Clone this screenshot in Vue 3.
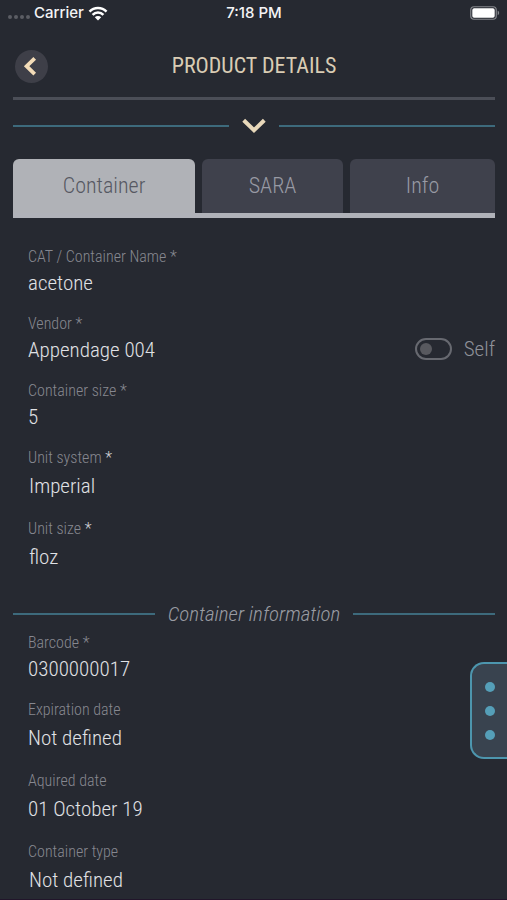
<script setup>
import { ref } from 'vue'

const tabs = ['Container', 'SARA', 'Info']
const activeTab = ref('Container')
const selfVendor = ref(false)

const details = ref([
  { id: 'name', label: 'CAT / Container Name', mark: 'dim', kind: 'text', value: 'acetone' },
  { id: 'vendor', label: 'Vendor', mark: 'dim', kind: 'text', value: 'Appendage 004', self: true },
  { id: 'size', label: 'Container size', mark: 'dim', kind: 'text', value: '5' },
  { id: 'system', label: 'Unit system', mark: 'bright', kind: 'select', value: 'Imperial' },
  { id: 'unit', label: 'Unit size', mark: 'bright', kind: 'select', value: 'floz' },
])

const information = ref([
  { id: 'barcode', label: 'Barcode', mark: 'dim', kind: 'text', value: '0300000017' },
  { id: 'expires', label: 'Expiration date', kind: 'date', value: 'Not defined' },
  { id: 'acquired', label: 'Aquired date', kind: 'date', value: '01 October 19' },
  { id: 'type', label: 'Container type', kind: 'select', value: 'Not defined' },
])
</script>

<template>
  <div class="screen">
    <div class="status">
      <div class="carrier">
        <span class="signal"><i></i><i></i><i></i><i></i></span>
        <span>Carrier</span>
        <svg class="wifi" viewBox="0 0 20 15" aria-hidden="true">
          <path d="M1.5 5.6a12 12 0 0 1 17 0" />
          <path d="M4.6 8.8a7.6 7.6 0 0 1 10.8 0" />
          <path class="solid" d="M10 14.6 6.8 11.3a4.6 4.6 0 0 1 6.4 0Z" />
        </svg>
      </div>
      <span class="time">7:18 PM</span>
      <svg class="battery" viewBox="0 0 30 14" aria-hidden="true">
        <rect class="shell" x=".75" y=".75" width="25.5" height="12.5" rx="3.2" />
        <rect class="charge" x="2.3" y="2.3" width="22.4" height="9.4" rx="1.8" />
        <path class="cap" d="M27.7 4.8c1.9.6 1.9 3.8 0 4.4Z" />
      </svg>
    </div>

    <header class="header">
      <button class="back" type="button" aria-label="Back">
        <svg viewBox="0 0 32 32" aria-hidden="true"><path d="M19.7 8.3 11.6 16.2l8.1 7.9" /></svg>
      </button>
      <h1>PRODUCT DETAILS</h1>
    </header>

    <div class="divider expand">
      <button class="toggle" type="button" aria-label="Expand">
        <svg viewBox="0 0 24 16" aria-hidden="true"><path d="M1.7 2.2 12 12.2 22.3 2.2" /></svg>
      </button>
    </div>

    <nav class="tabs" role="tablist">
      <button
        v-for="tab in tabs"
        :key="tab"
        type="button"
        role="tab"
        :aria-selected="activeTab === tab"
        :class="['tab', { active: activeTab === tab }]"
        @click="activeTab = tab"
      >{{ tab }}</button>
    </nav>

    <form class="form" @submit.prevent>
      <template v-for="(group, index) in [details, information]" :key="index">
        <div v-if="index === 1" class="divider section"><h2>Container information</h2></div>
        <div class="fields">
          <div v-for="field in group" :key="field.id" class="row">
            <div class="field">
              <label :for="field.id">{{ field.label }}<span v-if="field.mark" :class="field.mark"> *</span></label>
              <select v-if="field.kind === 'select'" :id="field.id" v-model="field.value">
                <option>{{ field.value }}</option>
              </select>
              <input v-else :id="field.id" v-model="field.value" type="text" :class="field.kind" />
            </div>
            <label v-if="field.self" class="self">
              <input v-model="selfVendor" type="checkbox" class="switch" />
              <span>Self</span>
            </label>
          </div>
        </div>
      </template>
    </form>

    <button class="drawer" type="button" aria-label="More actions"><i></i><i></i><i></i></button>
  </div>
</template>

<style>
body {
  background: #262931;
}
</style>

<style scoped>
.screen {
  position: relative;
  box-sizing: border-box;
  min-height: 100vh;
  overflow: hidden;
  background: #262931;
  border-bottom: 1px solid #21152a;
  font-family: "Roboto Condensed", "Liberation Sans Narrow", Roboto, sans-serif;
  font-weight: 300;
}
button, input, select {
  font: inherit;
  color: inherit;
  margin: 0;
  padding: 0;
  border: 0;
  background: none;
}
.status {
  display: grid;
  grid-template-columns: 1fr auto 1fr;
  align-items: center;
  height: 26px;
  padding: 0 7px 0 8px;
  color: #f4f4f6;
  font: 500 15px/18px Inter, sans-serif;
}
.carrier {
  display: flex;
  align-items: center;
  gap: 4px;
}
.signal {
  display: flex;
  gap: 2px;
  padding-top: 8px;
}
.signal i {
  width: 4px;
  height: 4px;
  border-radius: 50%;
  background: #5b5d64;
}
.wifi {
  width: 20px;
  height: 15px;
  fill: none;
  stroke: #fff;
  stroke-width: 2.6;
}
.wifi .solid {
  fill: #fff;
  stroke: none;
}
.battery {
  width: 30px;
  height: 14px;
  justify-self: end;
}
.shell {
  fill: none;
  stroke: #85878c;
  stroke-width: 1.2;
}
.charge { fill: #fff; }
.cap { fill: #85878c; }
.header {
  display: grid;
  grid-template-columns: 34px 1fr 34px;
  align-items: center;
  height: 71px;
  margin: 0 12px 0 13px;
  padding: 0 2px;
  border-bottom: 3px solid #4b4e57;
  color: #d9ccb4;
}
.back {
  width: 33px;
  height: 33px;
  margin-top: 9px;
  border-radius: 50%;
  background: #3e3f48;
}
.back svg {
  display: block;
  width: 32px;
  height: 32px;
  fill: none;
  stroke: #f3dcb8;
  stroke-width: 3.8;
}
h1 {
  margin: 8px 0 0;
  text-align: center;
  font-size: 22px;
  font-weight: 400;
  line-height: 28px;
}
.divider {
  display: flex;
  align-items: center;
  gap: 13px;
  margin: 0 12px 0 13px;
}
.divider::before, .divider::after {
  content: "";
  flex: 1;
  height: 2px;
  background: #3d6a7c;
}
.expand {
  height: 51px;
}
.toggle svg {
  display: block;
  width: 24px;
  height: 16px;
  fill: none;
  stroke: #e8d8ba;
  stroke-width: 4;
}
.tabs {
  display: grid;
  grid-template-columns: 182fr 141fr 145fr;
  gap: 7px;
  height: 54px;
  margin: 8px 12px 0 13px;
  border-bottom: 5px solid #b0b2b9;
}
.tab {
  padding-bottom: 2px;
  border-radius: 6px 6px 0 0;
  background: #3f414c;
  color: #989aa4;
  font-size: 22px;
}
.tab.active {
  background: #b0b2b7;
  color: #565862;
}
.form {
  padding-top: 29px;
}
.fields {
  display: grid;
  gap: 15px;
  padding: 0 12px 0 28px;
}
.row {
  display: flex;
  justify-content: space-between;
  align-items: flex-end;
}
.field {
  display: flex;
  flex-direction: column;
  color: #e0e1e5;
}
.field label {
  color: #868890;
  font-size: 16px;
  line-height: 20px;
  white-space: pre;
}
.field .bright { color: #d3d4d8; }
.field input, .field select {
  width: 240px;
  height: 32px;
  font-size: 21px;
}
.field .date, .field select {
  height: 36px;
}
.field select {
  appearance: none;
  padding-left: 1px;
}
.self {
  display: flex;
  align-items: center;
  gap: 12px;
  height: 34px;
  color: #8f9199;
  font-size: 21px;
}
.self .switch {
  appearance: none;
  box-sizing: border-box;
  display: grid;
  align-items: center;
  width: 37px;
  height: 22px;
  padding: 0 3px;
  border: 2px solid #676970;
  border-radius: 11px;
}
.switch::before {
  content: "";
  width: 12px;
  height: 12px;
  border-radius: 50%;
  background: #58595f;
}
.switch:checked::before { justify-self: end; }
.section {
  margin-top: 23px;
  margin-bottom: 3px;
  height: 32px;
}
.section h2 {
  margin: 0;
  color: #9a9ca3;
  font-size: 21px;
  font-style: italic;
  font-weight: 300;
}
.drawer {
  position: absolute;
  top: 662px;
  right: 0;
  box-sizing: border-box;
  display: flex;
  flex-direction: column;
  justify-content: center;
  align-items: center;
  gap: 14px;
  width: 37px;
  height: 97px;
  border: 2px solid #4d96ae;
  border-right: 0;
  border-radius: 14px 0 0 14px;
  background: #39434f;
}
.drawer i {
  width: 10px;
  height: 10px;
  border-radius: 50%;
  background: #559fb8;
}
</style>
